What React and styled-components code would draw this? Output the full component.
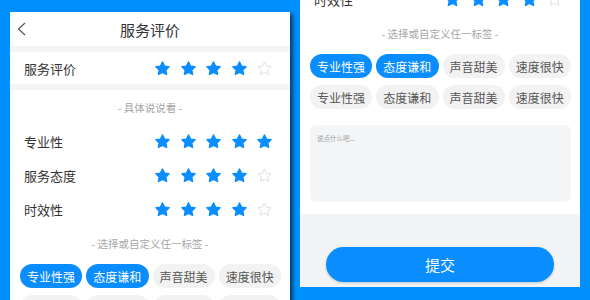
import React from 'react';
import styled, { createGlobalStyle } from 'styled-components';

const GlobalStyle = createGlobalStyle`
  html, body {
    margin: 0;
    padding: 0;
    background: #0091ff;
    font-family: "Noto Sans CJK SC", "Noto Sans", sans-serif;
    overflow: hidden;
  }
`;

const BLUE = '#0a8dff';

const Stage = styled.div`
  display: flex;
  align-items: flex-start;
  gap: 10px;
  padding-left: 10px;
  height: 300px;
  overflow: hidden;
`;

const Phone = styled.div`
  width: 280px;
  flex: none;
  background: #fff;
  margin-top: ${(p) => p.$top || 0}px;
  box-shadow: ${(p) => (p.$shadow ? '3px 2px 4px rgba(0, 0, 0, 0.55)' : 'none')};
`;

const ScrolledPhone = styled(Phone)`
  height: 287px;
  display: flex;
  flex-direction: column;
  background: #f3f4f6;
`;

const Viewport = styled.div`
  flex: 1;
  display: flex;
  flex-direction: column;
  justify-content: flex-end;
  overflow: hidden;
  background: #fff;
`;

const Header = styled.div`
  height: 34px;
  display: flex;
  align-items: center;
  justify-content: center;
  position: relative;
  font-size: 15px;
  color: #333;
`;

const Back = styled.svg`
  position: absolute;
  left: 7px;
  top: 10px;
`;

const Divider = styled.div`
  height: 6px;
  background: #f4f4f4;
`;

const Row = styled.div`
  height: ${(p) => p.$h || 34}px;
  display: flex;
  align-items: center;
  justify-content: space-between;
  padding: 0 17px 0 14px;
  font-size: 13px;
  color: #333;
  flex: none;
`;

const Stars = styled.div`
  display: flex;
  gap: 8.5px;
`;

const Hint = styled.div`
  height: 34px;
  display: flex;
  align-items: center;
  justify-content: center;
  font-size: 10.5px;
  color: #a6a6a6;
  flex: none;
`;

const Tags = styled.div`
  display: grid;
  grid-template-columns: repeat(4, 1fr);
  column-gap: 4px;
  row-gap: 7px;
  padding: 4px 9px 0 10px;
  flex: none;
`;

const Tag = styled.div`
  height: 24px;
  border-radius: 12px;
  display: flex;
  align-items: center;
  justify-content: center;
  font-size: 12px;
  background: ${(p) => (p.$on ? BLUE : '#f2f2f2')};
  color: ${(p) => (p.$on ? '#fff' : '#555')};
`;

const Note = styled.textarea`
  display: block;
  box-sizing: border-box;
  margin: 16px 9px 12px 10px;
  width: 261px;
  height: 77px;
  flex: none;
  border: none;
  border-radius: 6px;
  background: #f4f5f7;
  padding: 8px 7px;
  resize: none;
  font-family: inherit;
  font-size: 6.5px;
  &::placeholder {
    color: #9a9a9a;
  }
`;

const Footer = styled.div`
  height: 73px;
  flex: none;
  display: flex;
  justify-content: center;
  padding-top: 33px;
  box-sizing: border-box;
`;

const Submit = styled.button`
  width: 228px;
  height: 35px;
  border: none;
  border-radius: 18px;
  background: ${BLUE};
  color: #fff;
  font-family: inherit;
  font-size: 15px;
  box-shadow: 0 1px 3px rgba(0, 0, 0, 0.2);
`;

const Star = ({ on }) => (
  <svg width="17" height="17" viewBox="0 0 24 24">
    <path
      d="M12 2.8l2.85 5.9 6.45.85-4.72 4.5 1.2 6.4L12 17.35l-5.78 3.1 1.2-6.4-4.72-4.5 6.45-.85z"
      fill={on ? BLUE : 'none'}
      stroke={on ? BLUE : '#dcdcdc'}
      strokeWidth={on ? 2 : 1.3}
      strokeLinejoin="round"
    />
  </svg>
);

const Rating = ({ value }) => (
  <Stars>
    {[1, 2, 3, 4, 5].map((i) => (
      <Star key={i} on={i <= value} />
    ))}
  </Stars>
);

const items = [
  ['专业性', 5],
  ['服务态度', 4],
  ['时效性', 4],
];

const tagNames = ['专业性强', '态度谦和', '声音甜美', '速度很快'];

const Content = ({ note }) => (
  <>
    <Header>
      <Back width="9" height="14" viewBox="0 0 9 14">
        <polyline points="8,1 1.5,7 8,13" fill="none" stroke="#555" strokeWidth="1.2" />
      </Back>
      服务评价
    </Header>
    <Divider />
    <Row $h={32}>
      服务评价
      <Rating value={4} />
    </Row>
    <Divider />
    <Hint>- 具体说说看 -</Hint>
    {items.map(([label, v]) => (
      <Row key={label}>
        {label}
        <Rating value={v} />
      </Row>
    ))}
    <Hint>- 选择或自定义任一标签 -</Hint>
    <Tags>
      {tagNames.map((t, i) => (
        <Tag key={'a' + t} $on={i < 2}>{t}</Tag>
      ))}
      {tagNames.map((t) => (
        <Tag key={'b' + t}>{t}</Tag>
      ))}
    </Tags>
    {note && <Note placeholder="说点什么吧..." />}
  </>
);

export default function App() {
  return (
    <>
      <GlobalStyle />
      <Stage>
        <Phone $top={12} $shadow>
          <Content />
        </Phone>
        <ScrolledPhone>
          <Viewport>
            <Content note />
          </Viewport>
          <Footer>
            <Submit>提交</Submit>
          </Footer>
        </ScrolledPhone>
      </Stage>
    </>
  );
}
